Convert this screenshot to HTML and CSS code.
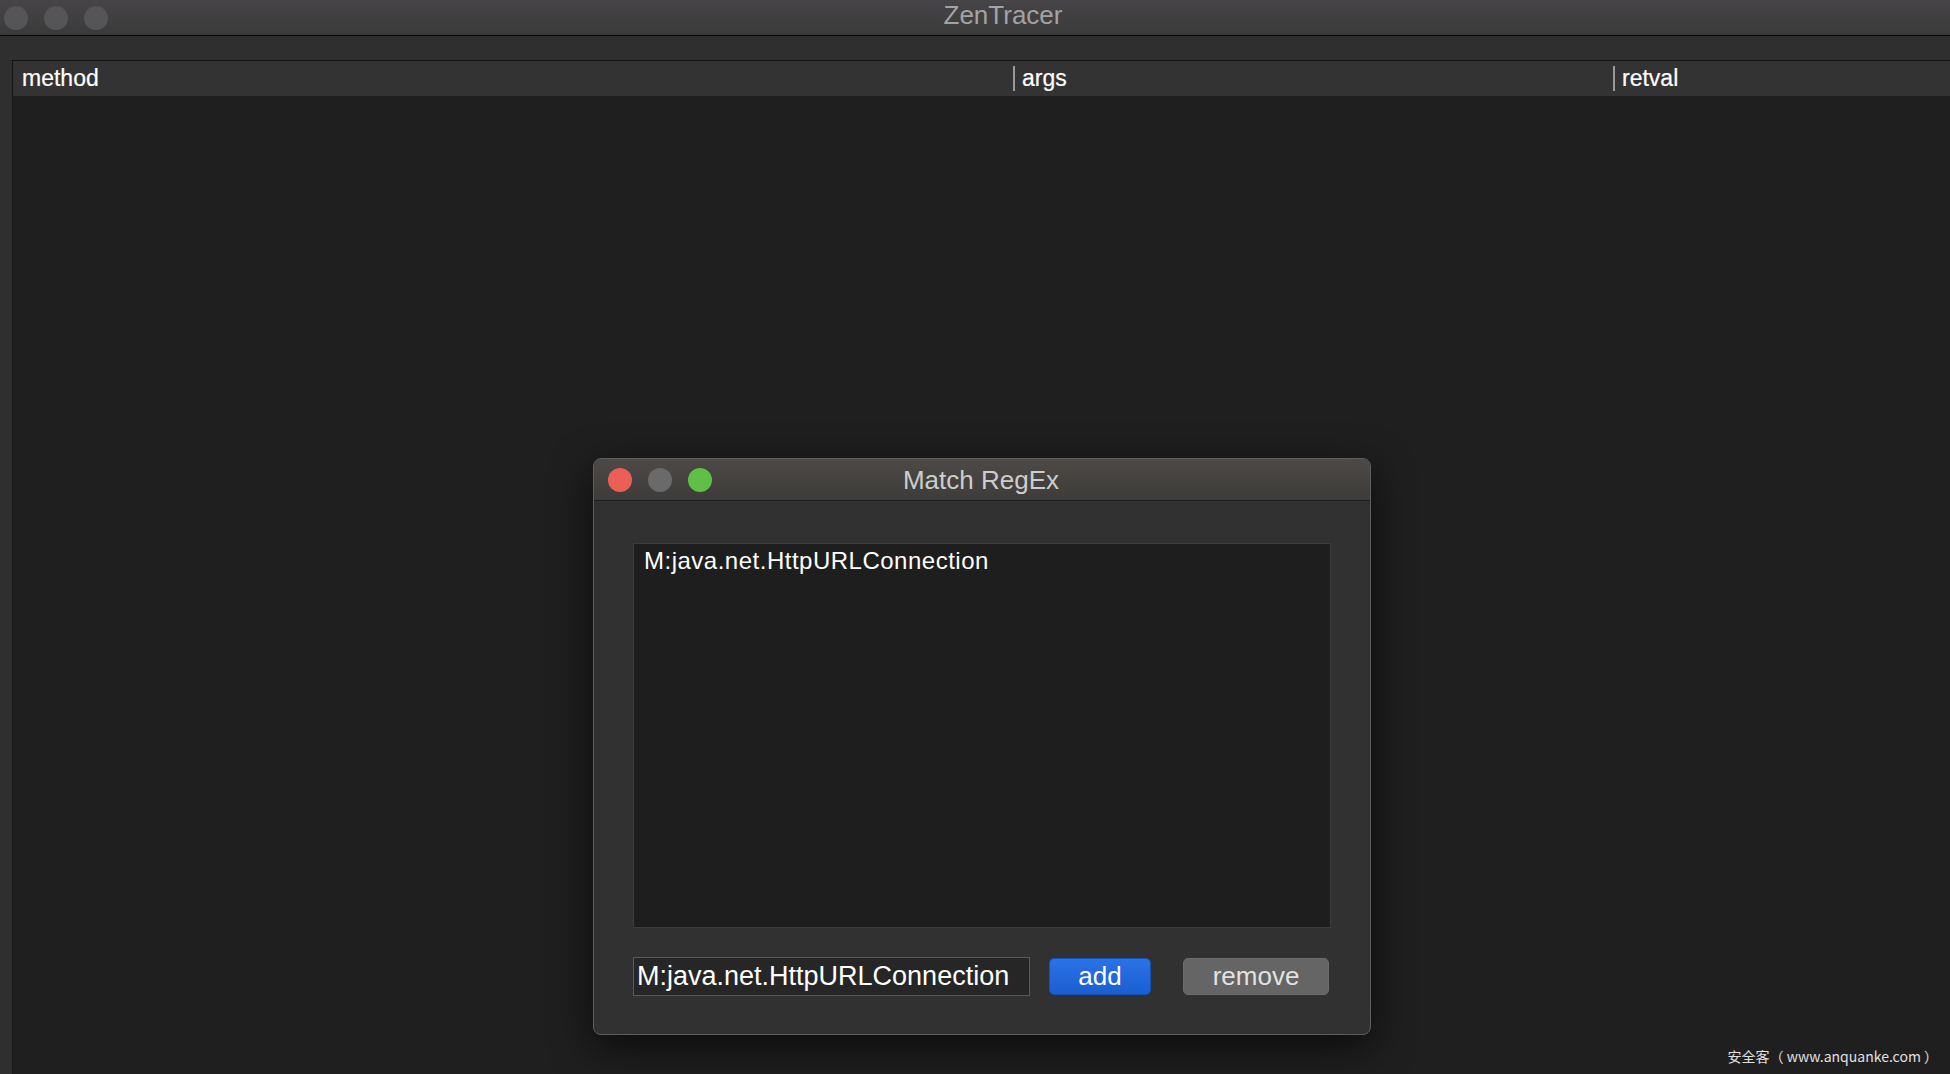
FILE: index.html
```html
<!DOCTYPE html>
<html lang="en">
<head>
    <meta charset="UTF-8">
    <title>ZenTracer</title>
    <link rel="stylesheet" href="styles.css">
</head>
<body>
    <div class="window">
        <div class="titlebar">
            <div class="lights">
                <span class="light"></span>
                <span class="light"></span>
                <span class="light"></span>
            </div>
            <div class="title">ZenTracer</div>
        </div>
        <div class="content">
            <div class="table">
                <div class="table-head">
                    <div class="col col-method">method</div>
                    <div class="col col-args"><span class="sep"></span>args</div>
                    <div class="col col-retval"><span class="sep"></span>retval</div>
                </div>
                <div class="table-body"></div>
            </div>
        </div>
    </div>

    <!-- dialog over the main window -->
    <div class="dialog">
        <div class="dialog-titlebar">
            <div class="lights">
                <span class="light red"></span>
                <span class="light grey"></span>
                <span class="light green"></span>
            </div>
            <div class="dialog-title">Match RegEx</div>
        </div>
        <div class="dialog-body">
            <div class="regex-list">
                <div class="regex-item">M:java.net.HttpURLConnection</div>
            </div>
            <div class="controls">
                <input class="regex-input" type="text" value="M:java.net.HttpURLConnection">
                <button class="btn btn-add">add</button>
                <button class="btn btn-remove">remove</button>
            </div>
        </div>
    </div>

    <div class="watermark">安全客（ www.anquanke.com ）</div>
</body>
</html>
```

FILE: styles.css
```css
html, body {
    margin: 0;
    height: 100%;
    overflow: hidden;
}

body {
    font-family: 'Liberation Sans', Arial, sans-serif;
    background-color: #1f1f1f;
    color: #ffffff;
    position: relative;
}

.window {
    display: flex;
    flex-direction: column;
    height: 100vh;
}

/* barra de titulo principal */
.titlebar {
    height: 35px;
    flex: none;
    background: linear-gradient(#464446, #3b3a3b);
    border-bottom: 1px solid #0a0a0a;
    display: flex;
    align-items: center;
}

.lights {
    display: flex;
    gap: 16px;
    padding-left: 4px;
}

.light {
    width: 24px;
    height: 24px;
    border-radius: 50%;
    background-color: #555456;
}

.title {
    flex: 1;
    text-align: center;
    font-size: 26px;
    color: #a3a3a3;
    margin-right: 52px;
    margin-top: -4px;
}

.content {
    flex: 1;
    background-color: #2f2f2f;
    padding: 24px 0 0 12px;
    display: flex;
}

.table {
    flex: 1;
    display: flex;
    flex-direction: column;
    border-top: 1px solid #111111;
    border-left: 1px solid #151515;
}

.table-head {
    height: 35px;
    flex: none;
    background-color: #333333;
    display: flex;
    align-items: center;
}

.col {
    font-size: 23px;
    color: #ffffff;
    display: flex;
    align-items: center;
    -webkit-text-stroke: 0.2px #ffffff;
}

.col-method {
    width: 991px;
    padding-left: 9px;
}

.col-args {
    width: 600px;
}

.col-retval {
    flex: 1;
}

.sep {
    width: 2px;
    height: 25px;
    background-color: #9a9a9a;
    margin-right: 7px;
}

.table-body {
    flex: 1;
    background-color: #1f1f1f;
}

/* ventana de dialogo */
.dialog {
    position: absolute;
    left: 593px;
    top: 458px;
    width: 776px;
    height: 575px;
    border: 1px solid #5e5e5e;
    border-radius: 8px;
    background-color: #313131;
    box-shadow: 0 12px 40px rgba(0, 0, 0, 0.65);
    display: flex;
    flex-direction: column;
    overflow: hidden;
}

.dialog-titlebar {
    height: 41px;
    flex: none;
    background: linear-gradient(#4c4946, #3e3c3a);
    border-bottom: 1px solid #1a1a1a;
    display: flex;
    align-items: center;
}

.dialog-titlebar .lights {
    padding-left: 14px;
}

.light.red {
    background-color: #ec5f57;
}

.light.grey {
    background-color: #6a6a6a;
}

.light.green {
    background-color: #5fbf46;
}

.dialog-title {
    flex: 1;
    text-align: center;
    font-size: 26px;
    color: #cdcdcd;
    margin-right: 120px;
    margin-top: 2px;
}

.dialog-body {
    flex: 1;
    padding: 42px 39px 0 39px;
    display: flex;
    flex-direction: column;
}

.regex-list {
    height: 379px;
    background-color: #1e1e1e;
    border: 1px solid #3d3d3d;
    padding: 2px 10px;
}

.regex-item {
    font-size: 24px;
    letter-spacing: 0.5px;
    color: #ffffff;
    line-height: 30px;
}

.controls {
    display: flex;
    align-items: center;
    margin-top: 29px;
}

.regex-input {
    width: 392px;
    height: 37px;
    box-sizing: content-box;
    padding: 0 0 0 3px;
    margin: 0;
    border: 1px solid #5a5a5a;
    background-color: #262626;
    color: #ffffff;
    font-family: 'Liberation Sans', Arial, sans-serif;
    font-size: 27px;
    outline: none;
}

.btn {
    height: 37px;
    border-radius: 5px;
    font-family: 'Liberation Sans', Arial, sans-serif;
    font-size: 26px;
    padding: 0;
    margin: 0;
    cursor: pointer;
}

.btn-add {
    width: 102px;
    margin-left: 19px;
    background: linear-gradient(#2b72e6, #1a5fd2);
    border: 1px solid #1552b8;
    color: #ffffff;
}

.btn-remove {
    width: 146px;
    margin-left: 32px;
    background-color: #656565;
    border: 1px solid #6c6c6c;
    color: #e2e2e2;
}

.watermark {
    position: absolute;
    right: 12px;
    bottom: 8px;
    font-family: 'Noto Sans CJK SC', sans-serif;
    font-size: 14px;
    color: #e0e0e0;
}
```
